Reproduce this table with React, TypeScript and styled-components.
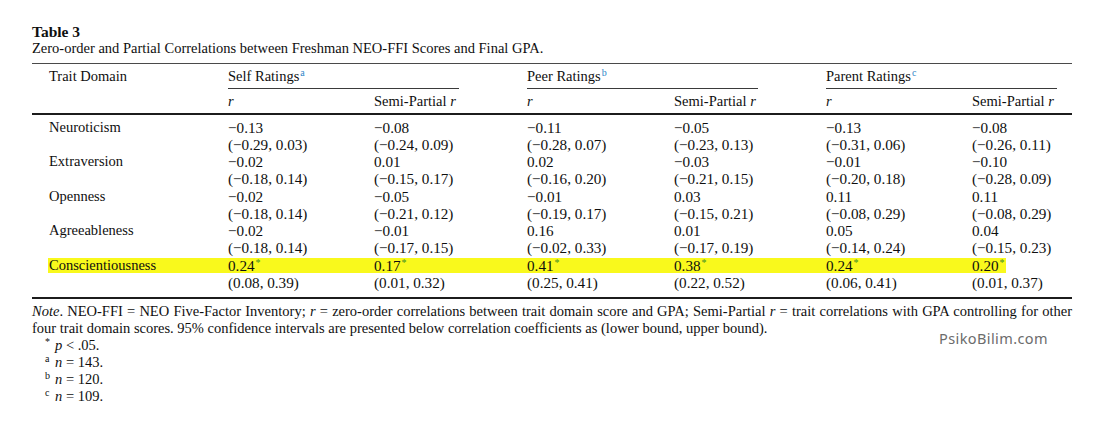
import React from "react";
import styled, { createGlobalStyle, css } from "styled-components";

const GlobalStyle = createGlobalStyle`
  html, body { margin: 0; padding: 0; background: #ffffff; }
  body { font-family: "Liberation Serif", "Times New Roman", serif; color: #0f0f0f; }
`;

const cols = css`
  display: grid;
  grid-template-columns: 196px 146px 153px 147px 152px 146px 100px;
`;

const Page = styled.div`
  position: relative;
  width: 1096px;
  height: 432px;
  box-sizing: border-box;
  padding: 23px 0 0 32px;
`;

const Title = styled.div`
  font-size: 15.5px;
  font-weight: 700;
  line-height: 17px;
`;

const Caption = styled.div`
  font-size: 14.5px;
  line-height: 17px;
`;

const Table = styled.div`
  width: 1040px;
  margin-top: 6px;
  border-top: 1px solid #4a4a4a;
  font-size: 14.5px;
  line-height: 17px;
`;

const HeadRow = styled.div<{ $last?: boolean }>`
  ${cols};
  padding-top: 4px;
  ${(p) =>
    p.$last &&
    css`
      padding-bottom: 3px;
      border-bottom: 2px solid #1c1c1c;
    `}
`;

const Cell = styled.div<{ $first?: boolean; $span?: number }>`
  padding-left: ${(p) => (p.$first ? "17px" : "0")};
  grid-column: ${(p) => (p.$span ? `span ${p.$span}` : "auto")};
  white-space: nowrap;
`;

const GroupLabel = styled.span`
  display: inline-block;
  width: 231px;
  padding-bottom: 3px;
  border-bottom: 1px solid #3a3a3a;
`;

const Sup = styled.sup<{ $color?: string }>`
  font-size: 10px;
  line-height: 0;
  vertical-align: 5px;
  margin-left: 1px;
  color: ${(p) => p.$color ?? "#2f86c8"};
`;

const Ital = styled.i`
  font-style: italic;
`;

const Body = styled.div`
  padding: 3.5px 0 6px;
  border-bottom: 2px solid #1c1c1c;
`;

const BodyRow = styled.div`
  ${cols};
  height: 17.25px;
  align-items: center;
`;

const BodyCell = styled.div<{ $first?: boolean; $mark?: boolean }>`
  padding-left: ${(p) => (p.$first ? "17px" : "0")};
  font-size: ${(p) => (p.$first ? "14.5px" : "15.2px")};
  white-space: nowrap;
  line-height: 15px;
  ${(p) =>
    p.$mark &&
    css`
      background: linear-gradient(#f9f91c, #f9f91c) no-repeat;
      background-position: ${p.$first ? "16px" : "0"} 0;
      background-size: ${p.$first ? "calc(100% - 16px)" : "100%"} 15px;
    `}
`;

const Mark = styled.span`
  display: inline-block;
  background: #f9f91c;
  padding-right: 1px;
`;

const Notes = styled.div`
  width: 1040px;
  margin-top: 3.5px;
  font-size: 14.5px;
  line-height: 17px;
`;

const JustLine = styled.div`
  text-align: justify;
  text-align-last: justify;
  white-space: nowrap;
`;

const Footnote = styled.div`
  display: flex;
  padding-left: 13px;
`;

const FootMark = styled.span`
  display: inline-block;
  flex: 0 0 10px;
  width: 10px;
  font-size: 10px;
  line-height: 0;
  align-self: flex-start;
  margin-top: 5px;
`;

const Watermark = styled.div`
  position: absolute;
  left: 939px;
  top: 328px;
  font-family: "Noto Sans", "Open Sans", sans-serif;
  font-size: 14.5px;
  letter-spacing: 0.4px;
  line-height: 20px;
  color: #6c6c6c;
`;

type Pair = [string, string];
type Trait = { name: string; vals: Pair[]; mark?: boolean };

const traits: Trait[] = [
  {
    name: "Neuroticism",
    vals: [
      ["−0.13", "(−0.29, 0.03)"],
      ["−0.08", "(−0.24, 0.09)"],
      ["−0.11", "(−0.28, 0.07)"],
      ["−0.05", "(−0.23, 0.13)"],
      ["−0.13", "(−0.31, 0.06)"],
      ["−0.08", "(−0.26, 0.11)"],
    ],
  },
  {
    name: "Extraversion",
    vals: [
      ["−0.02", "(−0.18, 0.14)"],
      ["0.01", "(−0.15, 0.17)"],
      ["0.02", "(−0.16, 0.20)"],
      ["−0.03", "(−0.21, 0.15)"],
      ["−0.01", "(−0.20, 0.18)"],
      ["−0.10", "(−0.28, 0.09)"],
    ],
  },
  {
    name: "Openness",
    vals: [
      ["−0.02", "(−0.18, 0.14)"],
      ["−0.05", "(−0.21, 0.12)"],
      ["−0.01", "(−0.19, 0.17)"],
      ["0.03", "(−0.15, 0.21)"],
      ["0.11", "(−0.08, 0.29)"],
      ["0.11", "(−0.08, 0.29)"],
    ],
  },
  {
    name: "Agreeableness",
    vals: [
      ["−0.02", "(−0.18, 0.14)"],
      ["−0.01", "(−0.17, 0.15)"],
      ["0.16", "(−0.02, 0.33)"],
      ["0.01", "(−0.17, 0.19)"],
      ["0.05", "(−0.14, 0.24)"],
      ["0.04", "(−0.15, 0.23)"],
    ],
  },
  {
    name: "Conscientiousness",
    mark: true,
    vals: [
      ["0.24", "(0.08, 0.39)"],
      ["0.17", "(0.01, 0.32)"],
      ["0.41", "(0.25, 0.41)"],
      ["0.38", "(0.22, 0.52)"],
      ["0.24", "(0.06, 0.41)"],
      ["0.20", "(0.01, 0.37)"],
    ],
  },
];

const groups = [
  { label: "Self Ratings", sup: "a" },
  { label: "Peer Ratings", sup: "b" },
  { label: "Parent Ratings", sup: "c" },
];

const Star = () => <Sup $color="#3f8f25">*</Sup>;

export default function App() {
  return (
    <>
      <GlobalStyle />
      <Page>
        <Title>Table 3</Title>
        <Caption>Zero-order and Partial Correlations between Freshman NEO-FFI Scores and Final GPA.</Caption>
        <Table>
          <HeadRow>
            <Cell $first>Trait Domain</Cell>
            {groups.map((g) => (
              <Cell key={g.label} $span={2}>
                <GroupLabel>
                  {g.label}
                  <Sup>{g.sup}</Sup>
                </GroupLabel>
              </Cell>
            ))}
          </HeadRow>
          <HeadRow $last>
            <Cell $first />
            {groups.map((g) => (
              <React.Fragment key={g.label}>
                <Cell>
                  <Ital>r</Ital>
                </Cell>
                <Cell>
                  Semi-Partial <Ital>r</Ital>
                </Cell>
              </React.Fragment>
            ))}
          </HeadRow>
          <Body>
            {traits.map((t) => (
              <React.Fragment key={t.name}>
                <BodyRow>
                  <BodyCell $first $mark={t.mark}>
                    {t.name}
                  </BodyCell>
                  {t.vals.map((v, i) => {
                    const last = i === t.vals.length - 1;
                    const content = (
                      <>
                        {v[0]}
                        {t.mark && <Star />}
                      </>
                    );
                    return (
                      <BodyCell key={i} $mark={t.mark && !last}>
                        {t.mark && last ? <Mark>{content}</Mark> : content}
                      </BodyCell>
                    );
                  })}
                </BodyRow>
                <BodyRow>
                  <BodyCell $first />
                  {t.vals.map((v, i) => (
                    <BodyCell key={i}>{v[1]}</BodyCell>
                  ))}
                </BodyRow>
              </React.Fragment>
            ))}
          </Body>
        </Table>
        <Notes>
          <JustLine>
            <Ital>Note</Ital>. NEO-FFI = NEO Five-Factor Inventory; <Ital>r</Ital> = zero-order correlations between
            trait domain score and GPA; Semi-Partial <Ital>r</Ital> = trait correlations with GPA controlling for other
          </JustLine>
          <div>
            four trait domain scores. 95% confidence intervals are presented below correlation coefficients as (lower
            bound, upper bound).
          </div>
          <Footnote>
            <FootMark>*</FootMark>
            <span>
              <Ital>p</Ital> &lt; .05.
            </span>
          </Footnote>
          <Footnote>
            <FootMark>a</FootMark>
            <span>
              <Ital>n</Ital> = 143.
            </span>
          </Footnote>
          <Footnote>
            <FootMark>b</FootMark>
            <span>
              <Ital>n</Ital> = 120.
            </span>
          </Footnote>
          <Footnote>
            <FootMark>c</FootMark>
            <span>
              <Ital>n</Ital> = 109.
            </span>
          </Footnote>
        </Notes>
        <Watermark>PsikoBilim.com</Watermark>
      </Page>
    </>
  );
}
